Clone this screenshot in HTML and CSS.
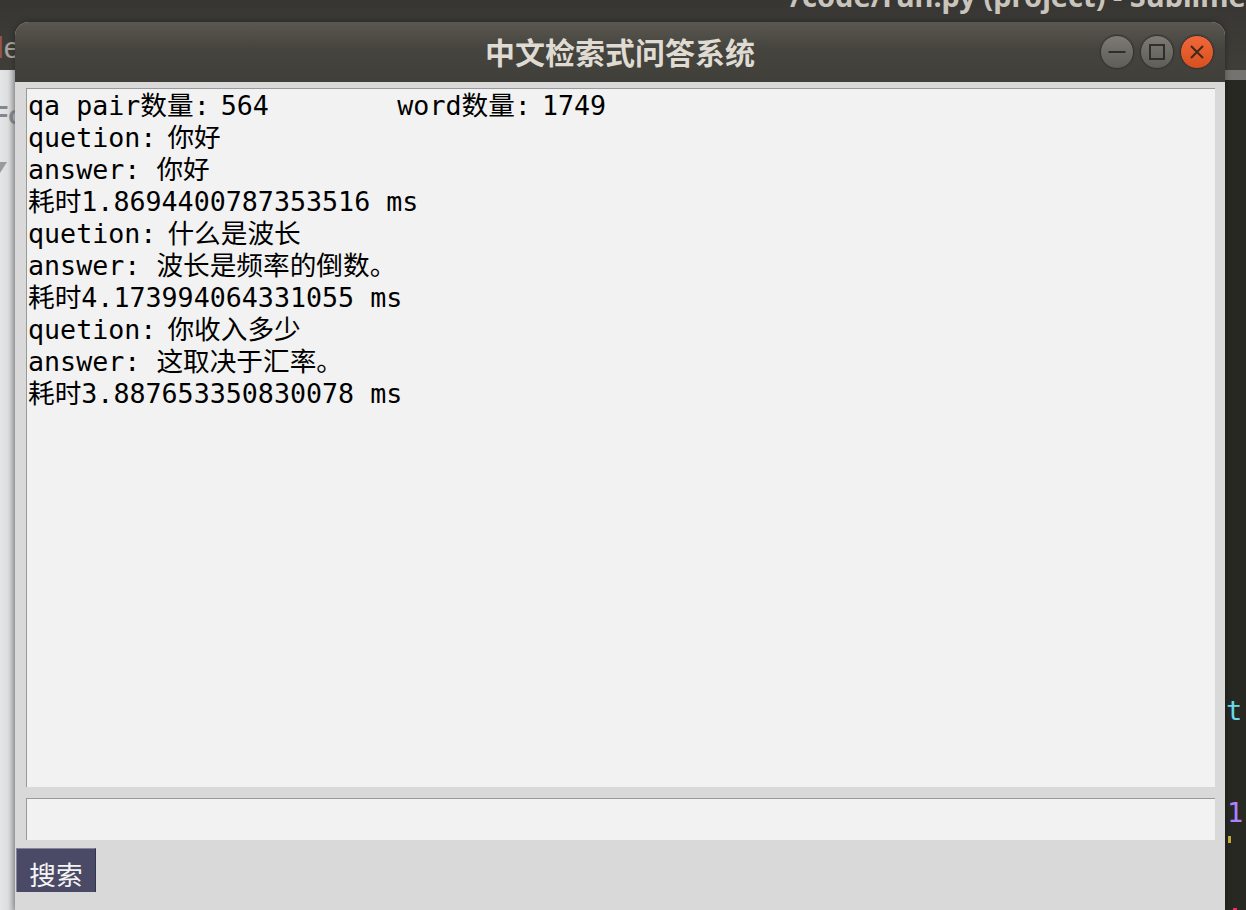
FILE: index.html
```html
<!DOCTYPE html>
<html lang="zh">
<head>
  <meta charset="UTF-8">
  <title>中文检索式问答系统</title>
  <link rel="stylesheet" href="styles.css">
</head>
<body>

  <!-- editor window behind the app -->
  <div class="editor">
    <div class="editor-title">/code/run.py (project) - Sublime</div>
    <div class="editor-tab-left"><span class="tab-l">l</span>e</div>
    <div class="editor-side"></div>
    <div class="side-text">Fo</div>
    <div class="side-arrow"></div>
    <div class="editor-tabs-right"></div>
    <div class="editor-code"></div>
    <span class="code-t">t</span>
    <span class="code-one">1</span>
    <span class="code-tick"></span>
    <span class="code-red"></span>
  </div>

  <div class="window">
    <div class="titlebar">
      <div class="title">中文检索式问答系统</div>
      <div class="controls">
        <div class="ctl">
          <svg width="20" height="20" viewBox="0 0 20 20"><path d="M1.5 10h17" stroke="#2f2e29" stroke-width="2"/></svg>
        </div>
        <div class="ctl">
          <svg width="20" height="20" viewBox="0 0 20 20"><rect x="3" y="3" width="14" height="14" fill="none" stroke="#2f2e29" stroke-width="2"/></svg>
        </div>
        <div class="ctl close">
          <svg width="20" height="20" viewBox="0 0 20 20"><path d="M4 4l12 12M16 4L4 16" stroke="#3d2a1c" stroke-width="2"/></svg>
        </div>
      </div>
    </div>

    <div class="content">
      <div class="output">
        <div class="line">qa pair数量<span class="sep">: </span>564        word数量<span class="sep">: </span>1749</div>
        <div class="line">quetion<span class="sep">: </span>你好</div>
        <div class="line">answer: 你好</div>
        <div class="line">耗时1.8694400787353516 ms</div>
        <div class="line">quetion<span class="sep">: </span>什么是波长</div>
        <div class="line">answer: 波长是频率的倒数。</div>
        <div class="line">耗时4.173994064331055 ms</div>
        <div class="line">quetion<span class="sep">: </span>你收入多少</div>
        <div class="line">answer: 这取决于汇率。</div>
        <div class="line">耗时3.887653350830078 ms</div>
      </div>
      <div class="entry"></div>
      <button class="search">搜索</button>
    </div>
  </div>

</body>
</html>
```

FILE: styles.css
```css
html, body {
  margin: 0;
  padding: 0;
  height: 100%;
}

body {
  position: relative;
  width: 1246px;
  height: 910px;
  overflow: hidden;
  background-color: #3c3b37;
}

/* background editor */
.editor {
  position: absolute;
  inset: 0;
  background: linear-gradient(#373632, #3f3e39 70px);
}

.editor-title {
  position: absolute;
  left: 790px;
  top: -21px;
  font-family: "Noto Sans", sans-serif;
  font-weight: bold;
  font-size: 29px;
  line-height: 34px;
  white-space: nowrap;
  color: #c9c5bd;
}

.editor-tab-left {
  position: absolute;
  left: -3px;
  top: 30px;
  font-family: "Liberation Sans", sans-serif;
  font-size: 30px;
  line-height: 36px;
  color: #a5a29c;
}

.tab-l {
  color: #94564c;
}

.editor-side {
  position: absolute;
  left: 0;
  top: 70px;
  width: 15px;
  bottom: 0;
  background: linear-gradient(90deg, #e4e6e8 0, #dcdddf 8px, #b4b4b4 15px);
}

.side-text {
  position: absolute;
  left: -7px;
  top: 98px;
  font-family: "Liberation Sans", sans-serif;
  font-weight: bold;
  font-size: 25px;
  line-height: 34px;
  color: #84888c;
}

.side-arrow {
  position: absolute;
  left: -7px;
  top: 162px;
  border-left: 7px solid transparent;
  border-right: 7px solid transparent;
  border-top: 11px solid #9b9b9b;
}

.editor-tabs-right {
  position: absolute;
  left: 1225px;
  right: 0;
  top: 70px;
  height: 10px;
  background-color: #74736f;
}

.editor-code {
  position: absolute;
  left: 1225px;
  right: 0;
  top: 80px;
  bottom: 0;
  background-color: #272822;
}

.code-t, .code-one {
  position: absolute;
  font-family: "DejaVu Sans Mono", monospace;
  font-size: 27px;
  line-height: 32px;
}

.code-t {
  left: 1226px;
  top: 695px;
  color: #66d9ef;
}

.code-one {
  left: 1227px;
  top: 797px;
  color: #ae81ff;
}

.code-tick {
  position: absolute;
  left: 1228px;
  top: 836px;
  width: 3px;
  height: 7px;
  background-color: #c9b03c;
}

.code-red {
  position: absolute;
  left: 1233px;
  top: 908px;
  width: 4px;
  height: 2px;
  background-color: #f92672;
}

/* app window */
.window {
  position: absolute;
  left: 15px;
  top: 22px;
  width: 1210px;
  height: 888px;
  display: flex;
  flex-direction: column;
  background-color: #d9d9d9;
  border-radius: 14px 14px 0 0;
  box-shadow: 0 0 6px rgba(0, 0, 0, 0.35);
}

.titlebar {
  position: relative;
  height: 60px;
  flex: none;
  display: flex;
  align-items: center;
  justify-content: center;
  background: linear-gradient(#5a5750, #45443e 45%, #403f39);
  border-radius: 14px 14px 0 0;
}

.title {
  font-family: "Noto Sans CJK SC", sans-serif;
  font-weight: bold;
  font-size: 30px;
  line-height: 60px;
  margin-top: -3px;
  color: #dfdbd2;
}

.controls {
  position: absolute;
  right: 11px;
  top: 13px;
  display: flex;
  gap: 6px;
}

.ctl {
  width: 34px;
  height: 34px;
  box-sizing: border-box;
  border-radius: 50%;
  display: flex;
  align-items: center;
  justify-content: center;
  background: linear-gradient(#7c7a74, #5f5d58);
  border: 1px solid #353430;
  box-shadow: 0 0 0 1px rgba(60, 59, 55, 0.6);
}

.ctl.close {
  background: linear-gradient(#f0683a, #d9501f);
}

.content {
  flex: 1;
  display: flex;
  flex-direction: column;
  padding: 6px 10px 0 1px;
}

.output {
  height: 699px;
  margin-left: 10px;
  padding-left: 1px;
  padding-top: 1px;
  box-sizing: border-box;
  background-color: #f2f2f2;
  border-top: 1px solid #999;
  border-left: 1px solid #999;
  font-family: "DejaVu Sans Mono", "Noto Sans CJK SC", monospace;
  font-size: 26.67px;
  color: #000;
}

.line {
  height: 32px;
  line-height: 32px;
  white-space: pre;
}

/* the space after these colons is narrower in the original */
.sep {
  word-spacing: -5px;
}

.entry {
  height: 42px;
  margin: 11px 0 0 10px;
  box-sizing: border-box;
  background-color: #f2f2f2;
  border-top: 1px solid #999;
  border-left: 1px solid #999;
}

.search {
  width: 80px;
  height: 44px;
  margin: 8px 0 0 0;
  padding: 5px 0 0 0;
  box-sizing: border-box;
  background-color: #4a4a66;
  border: 0;
  border-top: 1px solid #85859a;
  border-left: 1px solid #85859a;
  border-right: 1px solid #33334a;
  border-radius: 0;
  font-family: "Noto Sans CJK SC", sans-serif;
  font-size: 26.67px;
  color: #f4f4f4;
}
```
